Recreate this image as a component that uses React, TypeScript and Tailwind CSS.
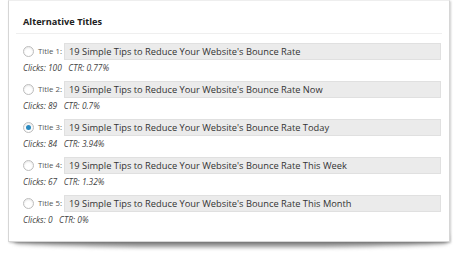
import React from 'react';

const rows = [
    { n: 1, title: "19 Simple Tips to Reduce Your Website's Bounce Rate", clicks: '100', ctr: '0.77%' },
    { n: 2, title: "19 Simple Tips to Reduce Your Website's Bounce Rate Now", clicks: '89', ctr: '0.7%' },
    { n: 3, title: "19 Simple Tips to Reduce Your Website's Bounce Rate Today", clicks: '84', ctr: '3.94%', checked: true },
    { n: 4, title: "19 Simple Tips to Reduce Your Website's Bounce Rate This Week", clicks: '67', ctr: '1.32%' },
    { n: 5, title: "19 Simple Tips to Reduce Your Website's Bounce Rate This Month", clicks: '0', ctr: '0%' },
];

const App: React.FC = () => {
    return (
        <div className="w-[460px] h-[263px] bg-white overflow-hidden" style={{ fontFamily: '"Open Sans", sans-serif' }}>
            <div className="relative ml-[8px] w-[442px] h-[242px]">
                {/* lifted shadow under the card */}
                <div className="absolute left-[6px] right-[2px] bottom-[-5px] h-[12px] bg-[#8e8e8e] blur-[2px] rounded-b-[40%]" />
                <div className="relative h-full bg-white border border-[#d6d6d6] border-t-[#eeeeee] shadow-[1px_1px_2px_rgba(0,0,0,0.2)]">
                    <div className="mx-[7px] pt-[14px] pb-[4px] px-[7px] border-b border-[#efefef]">
                        <h3 className="text-[9.2px] font-bold text-[#222] leading-[14px]">Alternative Titles</h3>
                    </div>
                    <div className="pl-[14px] pr-[8px] pt-[9px] flex flex-col gap-[7px]">
                        {rows.map((r) => (
                            <div key={r.n} className="flex flex-col">
                                <div className="flex items-center h-[17px]">
                                    <span className="w-[11px] h-[11px] rounded-full border border-[#bdbdbd] bg-white shadow-[inset_0_1px_2px_rgba(0,0,0,0.1)] flex items-center justify-center">
                                        {r.checked && <span className="w-[5px] h-[5px] rounded-full bg-[#2a8ac0]" />}
                                    </span>
                                    <span className="ml-[4px] w-[26px] text-[7.8px] text-[#555] whitespace-nowrap">Title {r.n}:</span>
                                    <div className="flex-1 h-[17px] bg-[#ebebeb] border border-[#e0e0e0] flex items-center pl-[4px] text-[9.3px] text-[#333] whitespace-nowrap overflow-hidden">
                                        {r.title}
                                    </div>
                                </div>
                                <div className="mt-[2px] text-[8.4px] italic text-[#444] leading-[12px]">
                                    Clicks: {r.clicks}&nbsp;&nbsp; CTR: {r.ctr}
                                </div>
                            </div>
                        ))}
                    </div>
                </div>
            </div>
        </div>
    );
};

export default App;
